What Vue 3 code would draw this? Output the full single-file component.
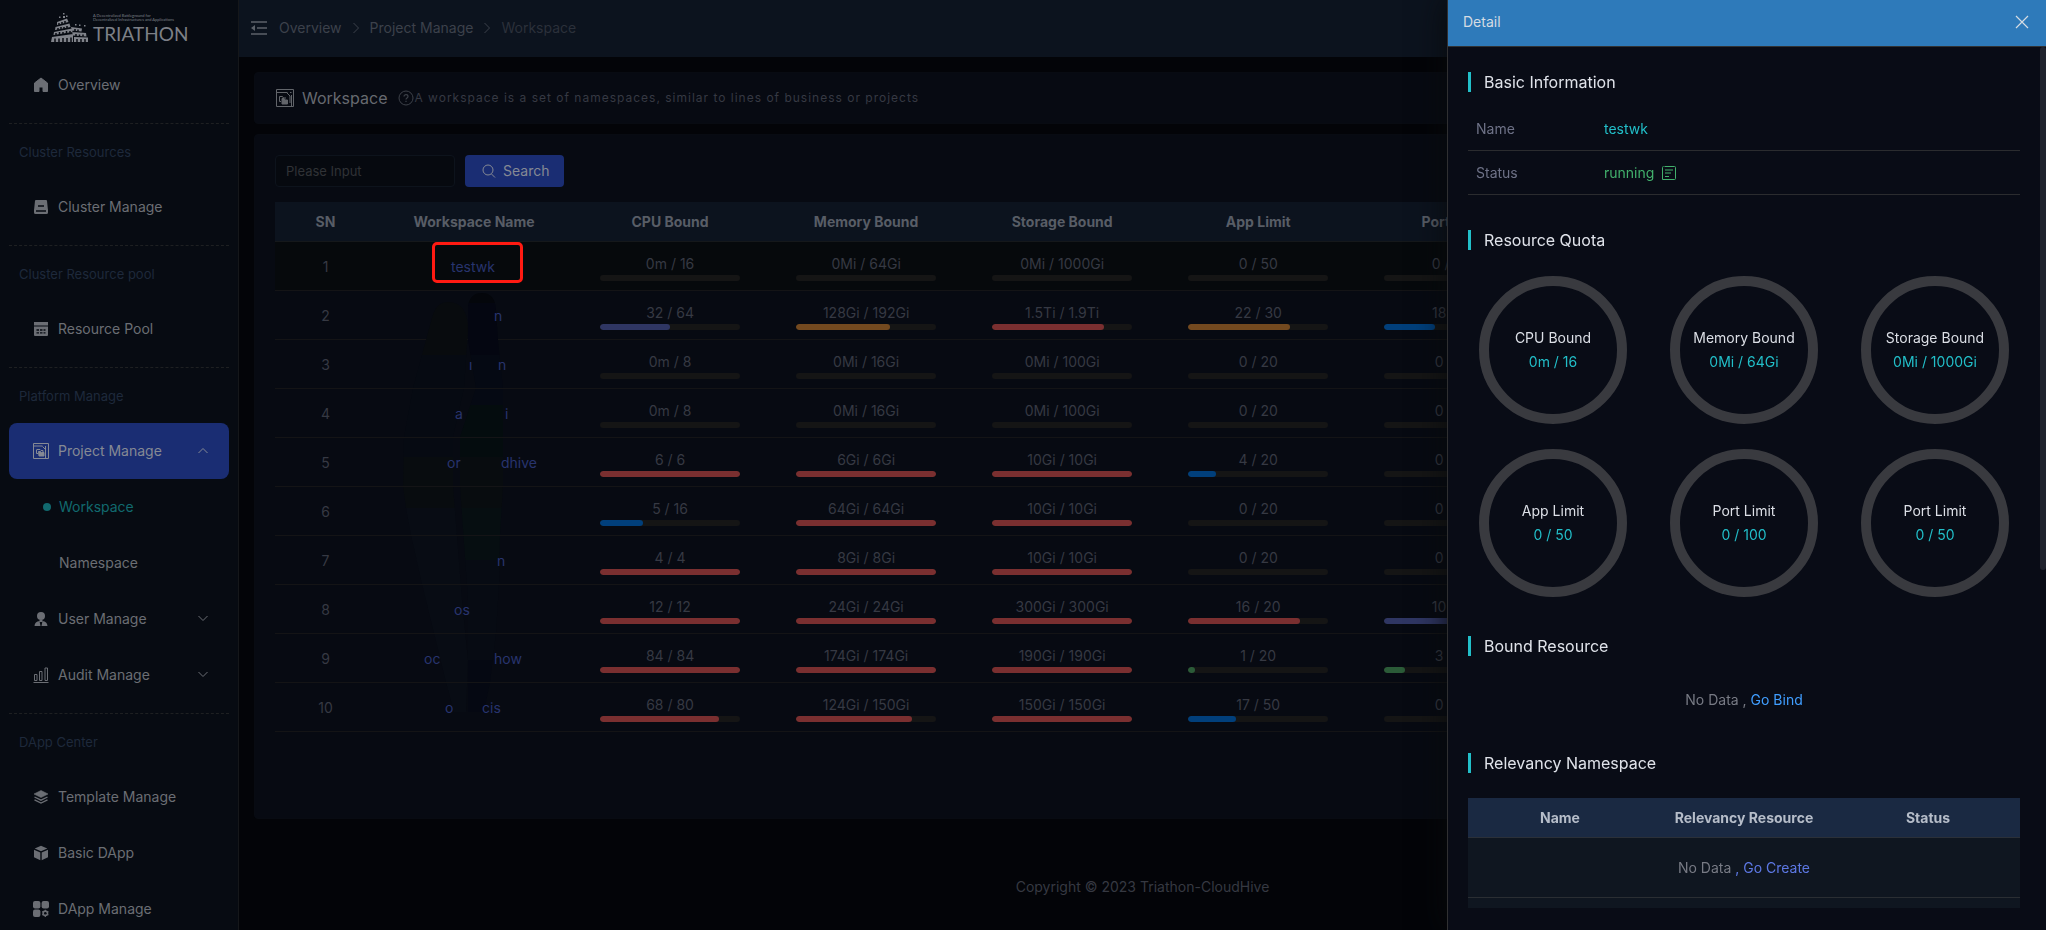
<script setup>
import { ref } from 'vue'

const keyword = ref('')

const groups = [
  { items: [{ label: 'Overview', icon: 'home' }] },
  { title: 'Cluster Resources', items: [{ label: 'Cluster Manage', icon: 'disk' }] },
  { title: 'Cluster Resource pool', items: [{ label: 'Resource Pool', icon: 'pool' }] },
  {
    title: 'Platform Manage',
    items: [
      {
        label: 'Project Manage',
        icon: 'project',
        open: true,
        children: [{ label: 'Workspace', current: true }, { label: 'Namespace' }]
      },
      { label: 'User Manage', icon: 'user', children: [] },
      { label: 'Audit Manage', icon: 'chart', children: [] }
    ]
  },
  {
    title: 'DApp Center',
    items: [
      { label: 'Template Manage', icon: 'layers' },
      { label: 'Basic DApp', icon: 'cube' },
      { label: 'DApp Manage', icon: 'apps' }
    ]
  }
]

const columns = ['SN', 'Workspace Name', 'CPU Bound', 'Memory Bound', 'Storage Bound', 'App Limit', 'Port Limit', '']

// Each name is a list of [left offset inside the cell, visible text]
const rows = [
  { name: [[75, 'testwk']], cells: [['0m / 16', 0], ['0Mi / 64Gi', 0], ['0Mi / 1000Gi', 0], ['0 / 50', 0], ['0 / 100', 0]] },
  { name: [[118, 'n']], cells: [['32 / 64', 50, 'purple'], ['128Gi / 192Gi', 67, 'orange'], ['1.5Ti / 1.9Ti', 80, 'red'], ['22 / 30', 73, 'orange'], ['18 / 50', 36, 'blue']] },
  { name: [[93, 'ı'], [122, 'n']], cells: [['0m / 8', 0], ['0Mi / 16Gi', 0], ['0Mi / 100Gi', 0], ['0 / 20', 0], ['0 / 50', 0]] },
  { name: [[79, 'a'], [129, 'i']], cells: [['0m / 8', 0], ['0Mi / 16Gi', 0], ['0Mi / 100Gi', 0], ['0 / 20', 0], ['0 / 50', 0]] },
  { name: [[71, 'or'], [125, 'dhive']], cells: [['6 / 6', 100, 'red'], ['6Gi / 6Gi', 100, 'red'], ['10Gi / 10Gi', 100, 'red'], ['4 / 20', 20, 'blue'], ['0 / 50', 0]] },
  { name: [], cells: [['5 / 16', 31, 'blue'], ['64Gi / 64Gi', 100, 'red'], ['10Gi / 10Gi', 100, 'red'], ['0 / 20', 0], ['0 / 50', 0]] },
  { name: [[121, 'n']], cells: [['4 / 4', 100, 'red'], ['8Gi / 8Gi', 100, 'red'], ['10Gi / 10Gi', 100, 'red'], ['0 / 20', 0], ['0 / 50', 0]] },
  { name: [[78, 'os']], cells: [['12 / 12', 100, 'red'], ['24Gi / 24Gi', 100, 'red'], ['300Gi / 300Gi', 100, 'red'], ['16 / 20', 80, 'red'], ['10 / 20', 50, 'purple']] },
  { name: [[48, 'oc'], [118, 'how']], cells: [['84 / 84', 100, 'red'], ['174Gi / 174Gi', 100, 'red'], ['190Gi / 190Gi', 100, 'red'], ['1 / 20', 5, 'green'], ['3 / 20', 15, 'green']] },
  { name: [[69, 'o'], [106, 'cis']], cells: [['68 / 80', 85, 'red'], ['124Gi / 150Gi', 83, 'red'], ['150Gi / 150Gi', 100, 'red'], ['17 / 50', 34, 'blue'], ['0 / 50', 0]] }
]

const quotas = [
  ['CPU Bound', '0m / 16'],
  ['Memory Bound', '0Mi / 64Gi'],
  ['Storage Bound', '0Mi / 1000Gi'],
  ['App Limit', '0 / 50'],
  ['Port Limit', '0 / 100'],
  ['Port Limit', '0 / 50']
]
</script>

<template>
  <div class="shell">
    <aside class="sidebar">
      <div class="logo">
        <svg class="tower" width="38" height="30" viewBox="0 0 38 30" aria-hidden="true">
          <g fill="#80838a">
            <path d="M6 10l10-3.500 1.500 3.500-11.500 3zM4.500 15l14-3.500 1 3.500-15.500 3zM3 20l18-3.500.5 3.500L2.500 23zM1 25l21-3v8H0zM20 15l11 1.500-.5 3L21 18.500zM21 20l14 1 .5 3.500L22 23.500zM23 25l14 .5V30H23z" />
            <path d="M8 4.500h1.500v1.500H8zM12 1h1.500v1.500H12zM12 4h2v2h-2zM15 3.500h1.500v1.500H15zM24 12h1.500v1.500H24zM28 12.500h1.500V14H28zM33 13h1.500v1.500H33z" />
          </g>
          <g stroke="#070b12" stroke-width="1.500">
            <path d="M8 11v3M11 10v3M14 9v3M7 16v3M10 15v3M13 15v3M16 14v3M5 21v3M8.500 20v3M12 20v3M15.500 19v3M19 19v3M4 26.500V30M8 26.500V30M12 26V30M16 26V30M20 25.500V30M24 17v2M27 17.500v2M25 22v2M28.500 22.500v2M32 22.500v2M26 27v3M30 27v3M34 27v3" />
          </g>
        </svg>
        <div class="logo-text">
          <span class="tagline">A Decentralized Battleground for</span>
          <span class="tagline">Decentralized Infrastructures and Applications</span>
          <span class="brand">TRIATHON</span>
        </div>
      </div>

      <nav>
        <section v-for="(group, g) in groups" :key="g" class="group">
          <h2 v-if="group.title" class="group-title">{{ group.title }}</h2>
          <template v-for="item in group.items" :key="item.label">
            <a href="#" class="nav-item" :class="{ active: item.open }">
              <svg class="nav-icon" width="16" height="16" viewBox="0 0 16 16" aria-hidden="true">
                <path v-if="item.icon === 'home'" d="M8 1l6.500 5v8.500H10V10H6v4.500H1.500V6z" fill="currentColor" stroke="currentColor" stroke-linejoin="round" />
                <g v-else-if="item.icon === 'disk'">
                  <path d="M3 1h10a1 1 0 0 1 1 .8l1 9.700H1l1-9.700A1 1 0 0 1 3 1zM1 10.500h14v3a1.500 1.500 0 0 1-1.500 1.500h-11A1.500 1.500 0 0 1 1 13.500z" fill="currentColor" />
                  <path d="M5 7h6M3 12h10" stroke="#070b12" stroke-width="1.300" />
                </g>
                <g v-else-if="item.icon === 'pool'">
                  <path d="M1 1h14v3.500H1zM1 5.500h14V14a1 1 0 0 1-1 1H2a1 1 0 0 1-1-1z" fill="currentColor" />
                  <path d="M3.500 9h2.500M7 9h2.500M10.500 9h2M3.500 11.800h2.500M7 11.800h2.500M10.500 11.800h2" stroke="#070b12" stroke-width="1.300" />
                </g>
                <g v-else-if="item.icon === 'project'" fill="none" stroke="currentColor">
                  <path d="M.5.500h15v15H.5zM.5 3h9M12.500 3v12" />
                  <path d="M9.500 3.500L12 6" />
                  <path d="M4 6.500h3l1 1h2V9M3.500 6.500v4H5" />
                  <path d="M5.500 8.500h2l1 1h2.500v3.500H6z" fill="currentColor" />
                </g>
                <g v-else-if="item.icon === 'user'" fill="currentColor">
                  <circle cx="8" cy="5" r="4" />
                  <path d="M6.500 9h3v2h-3zM1.500 15c.2-3 2-4.500 5-5L7.500 15zM14.500 15c-.2-3-2-4.500-5-5L8.500 15z" />
                </g>
                <path v-else-if="item.icon === 'chart'" d="M.5 15.500h15M1.500 7.500h2.500v6H1.500zM6.500 4.500H9v9H6.500zM12 1h2.500v12.500H12z" fill="none" stroke="currentColor" />
                <g v-else-if="item.icon === 'layers'">
                  <path d="M8 1.500l7 3.500-7 3.500L1 5z" fill="currentColor" stroke="currentColor" stroke-width=".6" />
                  <path d="M1.500 8L8 11.200 14.500 8M1.500 10.800L8 14l6.500-3.200" fill="none" stroke="currentColor" stroke-width="1.300" />
                </g>
                <path v-else-if="item.icon === 'cube'" d="M8 .8l6.300 2.700L8 6.300 1.700 3.500zM1 4.800l6.300 2.700v7.700L1 12.300zM15 4.800L8.700 7.500v7.700l6.300-2.900z" fill="currentColor" />
                <g v-else-if="item.icon === 'apps'">
                  <rect x="0" y="0" width="7.400" height="7.400" rx="2" fill="currentColor" />
                  <rect x="8.600" y="0" width="7.400" height="7.400" rx="2" fill="currentColor" />
                  <rect x="0" y="8.600" width="7.400" height="7.400" rx="2" fill="currentColor" />
                  <circle cx="12.300" cy="12.300" r="2.200" fill="none" stroke="currentColor" stroke-width="1.600" />
                  <path d="M12.300 8.700v7.200M9.200 10.500l6.200 3.600M9.200 14.100l6.200-3.600" stroke="currentColor" stroke-width="1.200" />
                  <circle cx="12.300" cy="12.300" r="1.300" fill="#070b12" />
                </g>
              </svg>
              <span>{{ item.label }}</span>
              <svg v-if="item.children" class="chevron" width="12" height="12" viewBox="0 0 12 12" aria-hidden="true">
                <path :d="item.open ? 'M1.500 8L6 3.500 10.500 8' : 'M1.500 3L6 7.500 10.500 3'" fill="none" stroke="currentColor" />
              </svg>
            </a>
            <template v-if="item.children">
              <a v-for="child in item.children" :key="child.label" href="#" class="nav-item child" :class="{ current: child.current }">
                <i class="dot"></i><span>{{ child.label }}</span>
              </a>
            </template>
          </template>
        </section>
      </nav>
    </aside>

    <div class="page">
      <header class="topbar">
        <button type="button" class="fold" aria-label="Collapse menu">
          <svg width="16" height="14" viewBox="0 0 16 14" aria-hidden="true">
            <path d="M0 1h16M6 7h10M0 13h16" stroke="currentColor" stroke-width="1.300" />
            <path d="M0 7l4-3v6z" fill="currentColor" />
          </svg>
        </button>
        <nav class="crumbs">
          <a href="#">Overview</a>
          <svg width="8" height="12" viewBox="0 0 8 12" aria-hidden="true"><path d="M1.500 1L6.500 6l-5 5" fill="none" stroke="currentColor" /></svg>
          <a href="#">Project Manage</a>
          <svg width="8" height="12" viewBox="0 0 8 12" aria-hidden="true"><path d="M1.500 1L6.500 6l-5 5" fill="none" stroke="currentColor" /></svg>
          <span class="here">Workspace</span>
        </nav>
      </header>

      <main class="content">
        <section class="card intro">
          <svg width="18" height="18" viewBox="0 0 18 18" fill="none" stroke="#62656a" aria-hidden="true">
            <path d="M.5.500h17v17H.5zM.5 3.500h11M15.500 6v11" />
            <path d="M10.500 3.500l3.500 3.500V14M14 3.500h1.500" />
            <path d="M3.500 7.500h3l1 1.500h2.500M3.500 7.500v5H5" />
            <path d="M6 9.500h2l1 1.500h2.500v4H6z" fill="#62656a" />
          </svg>
          <h1>Workspace</h1>
          <svg width="16" height="16" viewBox="0 0 16 16" fill="none" stroke="#3d4149" aria-hidden="true">
            <circle cx="8" cy="8" r="7" />
            <path d="M6 6.500C6 4 10 4 10 6.500 10 8 8 8 8 9.500M8 10.800v1.200" stroke-width="1.200" />
          </svg>
          <p>A workspace is a set of namespaces, similar to lines of business or projects</p>
        </section>

        <section class="card list">
          <form class="filter" @submit.prevent>
            <input v-model="keyword" type="text" placeholder="Please Input" aria-label="Workspace name" />
            <button type="submit">
              <svg width="14" height="14" viewBox="0 0 14 14" fill="none" stroke="currentColor" aria-hidden="true">
                <circle cx="6" cy="6" r="5" /><path d="M9.500 10l3.500 3.500" />
              </svg>
              <span>Search</span>
            </button>
          </form>

          <div class="table-wrap">
            <table class="grid">
              <colgroup>
                <col class="col-sn" />
                <col v-for="n in 6" :key="n" class="col-data" />
                <col />
              </colgroup>
              <thead>
                <tr><th v-for="(c, i) in columns" :key="i">{{ c }}</th></tr>
              </thead>
              <tbody>
                <tr v-for="(row, i) in rows" :key="i" :class="{ hover: i === 0 }">
                  <td>{{ i + 1 }}</td>
                  <td class="name-cell">
                    <a v-if="row.name.length" href="#" class="name">
                      <span v-for="part in row.name" :key="part[0]" class="part" :style="{ left: part[0] + 'px' }">{{ part[1] }}</span>
                    </a>
                    <i v-if="i === 0" class="highlight"></i>
                    <svg v-if="i === 1" class="smudge" width="102" height="424" viewBox="403 292 102 424" aria-hidden="true">
                      <defs>
                        <clipPath id="strokeLeft">
                          <path d="M432 318Q436 302 448 302Q468 302 468 330L464 388 453 437V486L462 600 468 660 466 712H454L446 682 434 633 422 584 411 535 406 508 403 486 404 437 413 388 426 340z" />
                        </clipPath>
                        <clipPath id="strokeRight">
                          <path d="M468 306Q470 293 482 293Q495 293 496 310L498 340 503 388V486L500 535 499 584 496 633 490 682 484 712H468V600L460 486V437L476 388 468 340z" />
                        </clipPath>
                      </defs>
                      <g clip-path="url(#strokeLeft)">
                        <path fill="#080b0e" d="M400 300h70v55h-70z" />
                        <path fill="#060a12" d="M400 355h70v102h-70z" />
                        <path fill="#080c0f" d="M400 457h70v51h-70z" />
                        <path fill="#080c14" d="M400 508h70v208h-70z" />
                      </g>
                      <g clip-path="url(#strokeRight)">
                        <path fill="#04060b" d="M450 292h60v11h-60z" />
                        <path fill="#040611" d="M450 303h60v52h-60z" />
                        <path fill="#050913" d="M450 355h60v50h-60z" />
                        <path fill="#040c0e" d="M450 405h60v52h-60z" />
                        <path fill="#080c0f" d="M450 457h60v51h-60z" />
                        <path fill="#060e11" d="M450 508h60v52h-60z" />
                        <path fill="#070b13" d="M450 560h60v100h-60z" />
                        <path fill="#050812" d="M450 660h60v56h-60z" />
                      </g>
                    </svg>
                  </td>
                  <td v-for="(cell, c) in row.cells" :key="c">
                    <div class="usage">
                      <span>{{ cell[0] }}</span>
                      <div class="track"><div v-if="cell[1]" class="fill" :class="cell[2]" :style="{ width: cell[1] + '%' }"></div></div>
                    </div>
                  </td>
                  <td></td>
                </tr>
              </tbody>
            </table>
          </div>
        </section>
      </main>

      <footer class="copyright">Copyright © 2023 Triathon-CloudHive</footer>
    </div>

    <aside class="drawer" role="dialog" aria-label="Detail">
      <header class="drawer-head">
        <span>Detail</span>
        <button type="button" aria-label="Close">
          <svg width="14" height="14" viewBox="0 0 14 14" aria-hidden="true"><path d="M1 1l12 12M13 1L1 13" stroke="currentColor" stroke-width="1.200" /></svg>
        </button>
      </header>
      <div class="drawer-body">
        <h3>Basic Information</h3>
        <dl class="info">
          <div><dt>Name</dt><dd>testwk</dd></div>
          <div>
            <dt>Status</dt>
            <dd class="running">
              running
              <svg width="14" height="14" viewBox="0 0 14 14" fill="none" stroke="currentColor" aria-hidden="true">
                <path d="M2.500.500h10a1 1 0 0 1 1 1v11a1 1 0 0 1-1 1h-10M.5 13.500V1.500a1 1 0 0 1 1-1M.5 13.500h9M3 4h8M3 7h6M3 10.500h4" />
              </svg>
            </dd>
          </div>
        </dl>

        <h3>Resource Quota</h3>
        <div class="rings">
          <div v-for="(q, i) in quotas" :key="i" class="ring">
            <span>{{ q[0] }}</span>
            <b>{{ q[1] }}</b>
          </div>
        </div>

        <h3>Bound Resource</h3>
        <p class="empty">No Data , <a href="#" class="bind">Go Bind</a></p>

        <h3>Relevancy Namespace</h3>
        <div class="relation-wrap">
          <table class="relation">
            <thead><tr><th>Name</th><th>Relevancy Resource</th><th>Status</th></tr></thead>
            <tbody>
              <tr><td colspan="3">No Data <a href="#" class="create">, Go Create</a></td></tr>
            </tbody>
          </table>
        </div>
      </div>
      <i class="scrollbar"></i>
    </aside>
  </div>
</template>

<style>
html,
body {
  margin: 0;
  background: #030408;
}
</style>

<style scoped>
* {
  box-sizing: border-box;
}

.shell {
  display: flex;
  height: 100vh;
  overflow: hidden;
  background: #030408;
  color: #363943;
  font-family: Inter, "Liberation Sans", sans-serif;
  font-size: 14px;
  line-height: 22px;
}

a {
  color: inherit;
  text-decoration: none;
}

button {
  padding: 0;
  border: 0;
  background: none;
  color: inherit;
  font: inherit;
}

h1,
h2,
h3,
p,
dl,
dd {
  margin: 0;
  font-weight: 400;
}

/* sidebar */
.sidebar {
  flex: none;
  width: 239px;
  overflow: hidden;
  border-right: 1px solid #15171a;
  background: #070b12;
}

.logo {
  display: flex;
  gap: 4px;
  height: 57px;
  padding: 12px 0 0 51px;
  color: #7d8087;
}

.logo-text {
  display: flex;
  flex-direction: column;
  padding-top: 2px;
  white-space: nowrap;
}

.tagline {
  font-family: Lato, sans-serif;
  font-size: 4px;
  line-height: 4px;
}

.brand {
  font-family: Lato, sans-serif;
  font-size: 19px;
  line-height: 24px;
}

.group {
  margin: 0 9px 10px;
}

.group-title {
  height: 56px;
  padding-left: 10px;
  border-top: 1px dashed #1e2022;
  color: #1e293b;
  font-size: 13px;
  line-height: 56px;
}

.nav-item {
  display: flex;
  align-items: center;
  height: 56px;
  padding: 0 20px 0 24px;
  color: #6b6e74;
}

.nav-icon {
  flex: none;
  margin-right: 9px;
}

.chevron {
  margin-left: auto;
}

.nav-item.active {
  border-radius: 8px;
  background: #1a2d73;
  color: #858994;
}

.nav-item.child {
  padding-left: 34px;
}

.dot {
  width: 8px;
  height: 8px;
  margin-right: 8px;
  border-radius: 50%;
}

.nav-item.current {
  color: #11696e;
}

.current .dot {
  background: #11696e;
}

/* page */
.page {
  display: flex;
  flex: 1;
  flex-direction: column;
  min-width: 0;
}

.topbar {
  display: flex;
  flex: none;
  align-items: center;
  gap: 12px;
  height: 57px;
  padding: 0 12px 2px;
  background: #0c131e;
}

.fold {
  display: flex;
  color: #5c6169;
}

.crumbs {
  display: flex;
  align-items: center;
  gap: 10px;
  color: #3c414b;
}

.here {
  color: #2b303a;
}

.content {
  display: flex;
  flex: 1;
  flex-direction: column;
  gap: 10px;
  padding: 15px 15px 0;
}

.card {
  border: 1px solid #080b12;
  border-radius: 4px;
  background: #070a12;
}

.intro {
  display: flex;
  align-items: center;
  height: 52px;
  padding: 0 20px 0 21px;
}

.intro h1 {
  margin: 0 11px 0 8px;
  color: #66696f;
  font-size: 16px;
}

.intro p {
  color: #363943;
  font-size: 12px;
  letter-spacing: 1px;
}

.list {
  flex: 1;
  padding: 20px;
}

.filter {
  display: flex;
  gap: 10px;
  margin-bottom: 15px;
}

.filter input {
  width: 180px;
  height: 32px;
  padding: 0 10px;
  border: 1px solid #0d131c;
  border-radius: 4px;
  outline: 0;
  background: #06090f;
  color: #5a5d63;
  font: 13px Inter, sans-serif;
}

.filter input::placeholder {
  color: #303236;
}

.filter button {
  display: flex;
  align-items: center;
  gap: 7px;
  height: 32px;
  padding: 0 15px 0 17px;
  border-radius: 4px;
  background: #1a2d73;
  color: #858994;
}

.grid {
  width: 100%;
  border-collapse: separate;
  border-spacing: 0;
  table-layout: fixed;
  text-align: center;
}

.col-sn {
  width: 101px;
}

.col-data {
  width: 11.3%;
}

.grid th {
  height: 40px;
  padding: 0;
  border-bottom: 1px solid #15181b;
  background: #0c131e;
  color: #585d66;
  font-weight: 700;
}

.grid td {
  height: 49px;
  padding: 11px 0 9px;
  border-bottom: 1px solid #141416;
}

.hover td {
  background: #06090c;
}

.name-cell {
  position: relative;
}

.name {
  position: absolute;
  top: 14px;
  left: 0;
  z-index: 2;
  width: 100%;
  height: 22px;
  color: #28346e;
}

.part {
  position: absolute;
  top: 0;
}

.highlight {
  position: absolute;
  top: 0;
  left: 56px;
  width: 91px;
  height: 41px;
  border: 3px solid #ff1a12;
  border-radius: 5px;
}

.smudge {
  position: absolute;
  top: 1px;
  left: 27px;
  pointer-events: none;
}

.usage {
  display: flex;
  flex-direction: column;
  width: 140px;
  margin: 0 auto;
}

.track {
  height: 6px;
  overflow: hidden;
  border-radius: 3px;
  background: #151515;
}

.fill {
  height: 100%;
  border-radius: 3px;
}

.red {
  background: #7a2f30;
}

.orange {
  background: #73491f;
}

.purple {
  background: #2f3663;
}

.blue {
  background: #013f7b;
}

.green {
  background: #2b5b38;
}

.copyright {
  flex: none;
  padding: 57px 0 32px;
  color: #363942;
  text-align: center;
}

/* drawer */
.drawer {
  position: fixed;
  top: 0;
  right: 0;
  bottom: 0;
  z-index: 5;
  display: flex;
  flex-direction: column;
  width: 599px;
  border-left: 1px solid #303032;
  background: #090c16;
  box-shadow: 0 0 30px #080a0b;
}

.drawer-head {
  display: flex;
  flex: none;
  align-items: center;
  justify-content: space-between;
  height: 47px;
  padding: 0 17px 2px 15px;
  border-bottom: 1px solid #303234;
  background: #2e7aba;
  color: #d5dce3;
}

.drawer-head button {
  display: flex;
}

.drawer-body {
  flex: 1;
  padding: 25px 26px 22px 20px;
  overflow: hidden;
}

h3 {
  height: 20px;
  padding-left: 13px;
  border-left: 3px solid #22bfc9;
  color: #e0e3ea;
  font-size: 16px;
  line-height: 20px;
}

.info {
  margin: 15px 0 35px;
}

.info div {
  display: flex;
  align-items: center;
  height: 44px;
  padding-left: 8px;
  border-bottom: 1px solid #2b2c2f;
}

.info dt {
  width: 128px;
  color: #6e7287;
}

.info dd {
  display: flex;
  align-items: center;
  gap: 8px;
  color: #22bfc9;
}

.info .running {
  color: #42b06c;
}

.rings {
  display: grid;
  grid-template-columns: repeat(3, 148px);
  justify-content: center;
  gap: 25px 43px;
  margin: 26px 0 39px;
}

.ring {
  display: flex;
  flex-direction: column;
  align-items: center;
  justify-content: center;
  gap: 2px;
  height: 148px;
  border: 10px solid #393a3f;
  border-radius: 50%;
  color: #dcdfe6;
  white-space: nowrap;
}

.ring b {
  color: #22bfc9;
  font-weight: 400;
}

.empty {
  margin: 33px 0 42px;
  color: #777a84;
  text-align: center;
}

.bind {
  color: #409eff;
}

.relation-wrap {
  margin-top: 25px;
  padding-bottom: 10px;
  background: #0f1620;
}

.relation {
  width: 100%;
  border-collapse: separate;
  border-spacing: 0;
  table-layout: fixed;
  text-align: center;
}

.relation th {
  height: 40px;
  padding: 0;
  border-bottom: 1px solid #2b3038;
  background: #1a2942;
  color: #b6bdc9;
  font-weight: 700;
}

.relation td {
  height: 60px;
  padding: 0;
  border-bottom: 1px solid #2a2e33;
  color: #777a84;
}

.create {
  color: #5d78e4;
}

.scrollbar {
  position: absolute;
  top: 47px;
  right: 0;
  width: 6px;
  height: 523px;
  border-radius: 3px;
  background: #20232e;
}
</style>
